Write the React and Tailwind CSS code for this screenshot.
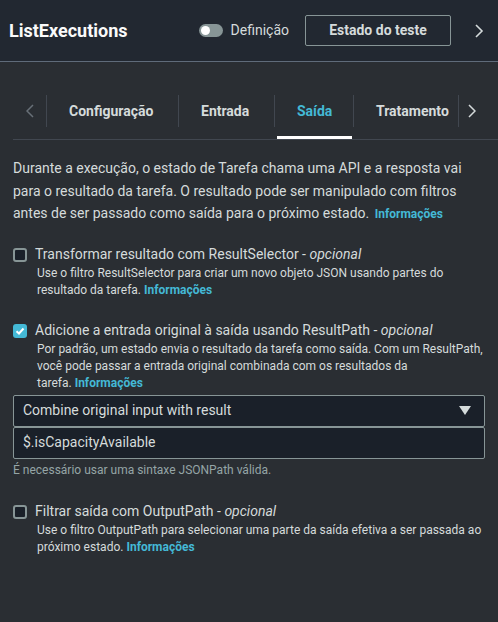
import React from 'react'

const Link = () => (
  <span className='font-bold text-[#44b9d6]'>Informações</span>
)

const Check = ({ checked }) => (
  <div className={
    checked
      ? 'w-[14px] h-[14px] rounded-[3px] bg-[#44b9d6] flex items-center justify-center shrink-0'
      : 'w-[14px] h-[14px] rounded-[3px] border-2 border-[#879596] bg-[#1a2029] shrink-0'
  }>
    {checked && (
      <svg width='10' height='10' viewBox='0 0 10 10'>
        <path d='M1.5 5.2 L4 7.5 L8.5 2.5' stroke='white' strokeWidth='2' fill='none' />
      </svg>
    )}
  </div>
)

const Option = ({ checked, title, children }) => (
  <div className='flex flex-col'>
    <div className='flex items-center gap-[8px] h-[18px]'>
      <Check checked={checked} />
      <span className='text-[14px] text-[#d5dbdb]'>
        {title} - <i>opcional</i>
      </span>
    </div>
    <p className='ml-[24px] mt-[1px] text-[12px] leading-[17px] text-[#d5dbdb]'>
      {children}
    </p>
  </div>
)

const Tab = ({ children, w, active, last }) => (
  <div className={
    'flex items-center pl-[22px] text-[14px] font-bold relative whitespace-nowrap overflow-visible ' +
    (active ? 'text-[#44b9d6] ' : 'text-[#d5dbdb] border-r border-[#414750] ') + w
  }>
    {children}
    {active && <div className='absolute left-[2px] right-[1px] bottom-[-12px] h-[3px] bg-white' />}
  </div>
)

export default function App() {
  return (
    <div className='w-[498px] h-[622px] bg-[#2a2e33] flex flex-col' style={{ fontFamily: 'Roboto, "Noto Sans", sans-serif' }}>
      <div className='h-[62px] bg-[#222831] flex items-center pl-[9px] pr-[14px] border-b border-[#5f6b7a]'>
        <div className='text-[18px] font-bold text-[#fafafa] flex-1'>ListExecutions</div>
        <div className='w-[24px] h-[13px] rounded-full bg-[#879596] flex items-center px-[2px]'>
          <div className='w-[9px] h-[9px] rounded-full bg-white' />
        </div>
        <span className='ml-[8px] text-[14px] text-[#d5dbdb]'>Definição</span>
        <button className='ml-[16px] w-[146px] h-[31px] border border-[#879596] rounded-[2px] text-[14px] font-bold text-[#d5dbdb]'>
          Estado do teste
        </button>
        <svg className='ml-[23px]' width='10' height='14' viewBox='0 0 10 14'>
          <path d='M2 1 L8 7 L2 13' stroke='#d5dbdb' strokeWidth='1.6' fill='none' />
        </svg>
      </div>

      <div className='mt-[33px] ml-[13px] flex items-stretch pb-[12px] border-b border-[#414750]'>
        <div className='h-[32px] w-[34px] flex items-center justify-center border-r border-[#414750]'>
          <svg width='8' height='14' viewBox='0 0 8 14'>
            <path d='M7 1 L1 7 L7 13' stroke='#687078' strokeWidth='1.5' fill='none' />
          </svg>
        </div>
        <Tab w='w-[132px] h-[32px]'>Configuração</Tab>
        <Tab w='w-[96px] h-[32px]'>Entrada</Tab>
        <Tab w='w-[79px] h-[32px] border-r border-[#414750]' active>Saída</Tab>
        <Tab w='w-[105px] h-[32px]'>Tratamento</Tab>
        <div className='h-[32px] w-[26px] flex items-center justify-center'>
          <svg width='8' height='14' viewBox='0 0 8 14'>
            <path d='M1 1 L7 7 L1 13' stroke='#d5dbdb' strokeWidth='1.5' fill='none' />
          </svg>
        </div>
      </div>

      <div className='px-[13px] pt-[17px] flex flex-col'>
        <p className='text-[14px] leading-[22.5px] text-[#d5dbdb]'>
          Durante a execução, o estado de Tarefa chama uma API e a resposta vai para o resultado da tarefa. O resultado pode ser manipulado com filtros antes de ser passado como saída para o próximo estado. <span className='ml-[2px] text-[12px]'><Link /></span>
        </p>

        <div className='mt-[20px]'>
          <Option title='Transformar resultado com ResultSelector'>
            Use o filtro ResultSelector para criar um novo objeto JSON usando partes do resultado da tarefa. <Link />
          </Option>
        </div>

        <div className='mt-[23px]'>
          <Option checked title='Adicione a entrada original à saída usando ResultPath'>
            Por padrão, um estado envia o resultado da tarefa como saída. Com um ResultPath, você pode passar a entrada original combinada com os resultados da<br />tarefa. <Link />
          </Option>
        </div>

        <div className='mt-[3px] h-[32px] border border-[#879596] rounded-[2px] bg-[#1a2029] flex items-center pl-[9px] pr-[13px]'>
          <span className='flex-1 text-[14px] text-[#d5dbdb]'>Combine original input with result</span>
          <svg width='12' height='10' viewBox='0 0 12 10'>
            <path d='M0 0 H12 L6 9 Z' fill='#d5dbdb' />
          </svg>
        </div>
        <div className='h-[32px] border border-[#879596] rounded-[2px] bg-[#1a2029] flex items-center pl-[9px]'>
          <span className='text-[14px] text-[#d5dbdb]'>$.isCapacityAvailable</span>
        </div>
        <p className='mt-[3px] text-[12px] leading-[17px] text-[#95a5a6]'>É necessário usar uma sintaxe JSONPath válida.</p>

        <div className='mt-[24px]'>
          <Option title='Filtrar saída com OutputPath'>
            Use o filtro OutputPath para selecionar uma parte da saída efetiva a ser passada ao próximo estado. <Link />
          </Option>
        </div>
      </div>
    </div>
  )
}
